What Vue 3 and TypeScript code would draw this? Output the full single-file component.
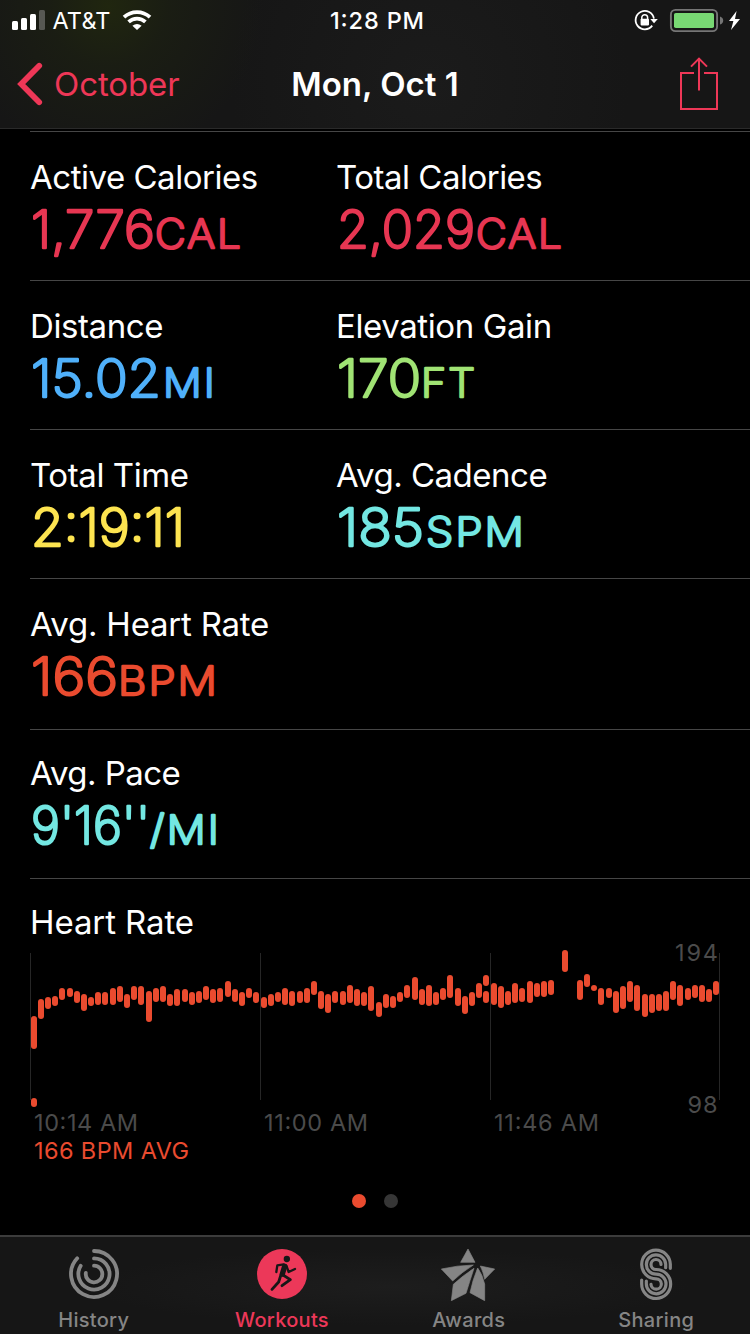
<script setup lang="ts">
interface Metric {
  label: string
  tracking?: number
  color: string
  value: string
  valueWidth: number
  unit?: string
  unitX?: number
  unitWidth?: number
}

const rows: Metric[][] = [
  [
    { label: 'Active Calories', tracking: -0.48, color: '#e73652', value: '1,776', valueWidth: 124, unit: 'CAL', unitX: 125, unitWidth: 88 },
    { label: 'Total Calories', tracking: -0.5, color: '#e73652', value: '2,029', valueWidth: 138, unit: 'CAL', unitX: 140, unitWidth: 88 },
  ],
  [
    { label: 'Distance', color: '#4fb0fa', value: '15.02', valueWidth: 130, unit: 'MI', unitX: 133, unitWidth: 54 },
    { label: 'Elevation Gain', color: '#a0e374', value: '170', valueWidth: 84, unit: 'FT', unitX: 85, unitWidth: 56 },
  ],
  [
    { label: 'Total Time', color: '#fde450', value: '2:19:11', valueWidth: 154 },
    { label: 'Avg. Cadence', tracking: -0.5, color: '#73e7e2', value: '185', valueWidth: 87, unit: 'SPM', unitX: 90, unitWidth: 100 },
  ],
  [{ label: 'Avg. Heart Rate', tracking: -0.22, color: '#ea4b2f', value: '166', valueWidth: 87, unit: 'BPM', unitX: 88, unitWidth: 101 }],
  [{ label: 'Avg. Pace', tracking: -0.55, color: '#73e7e2', value: "9'16''", valueWidth: 119, unit: '/MI', unitX: 120, unitWidth: 71 }],
]

// Each sample: centre x, top, bottom
const samples: number[][] = [
  [34, 76, 109], [34, 158, 167], [41, 59, 79], [48, 57, 69], [55, 56, 66], [62, 48, 60], [70, 48, 57],
  [77, 51, 63], [84, 54, 71], [91, 57, 66], [98, 52, 65], [105, 52, 65], [113, 48, 65], [120, 46, 62],
  [127, 54, 68], [134, 46, 60], [141, 46, 65], [149, 51, 82], [156, 48, 62], [163, 46, 62], [170, 54, 66],
  [177, 49, 66], [185, 49, 62], [192, 52, 65], [199, 51, 63], [206, 46, 60], [213, 49, 63], [220, 48, 62],
  [228, 41, 57], [235, 49, 62], [242, 52, 66], [249, 48, 58], [256, 52, 63], [264, 57, 68], [271, 54, 66],
  [278, 52, 62], [285, 48, 65], [292, 51, 66], [300, 51, 63], [307, 48, 63], [314, 41, 55], [321, 51, 69],
  [328, 54, 73], [335, 51, 63], [343, 51, 65], [350, 45, 63], [357, 49, 66], [364, 52, 66], [371, 46, 71],
  [379, 62, 77], [386, 54, 68], [393, 56, 68], [400, 52, 62], [407, 45, 58], [415, 37, 60], [422, 49, 65],
  [429, 45, 66], [436, 52, 65], [443, 48, 60], [450, 35, 58], [458, 48, 66], [465, 56, 74], [472, 52, 66],
  [479, 43, 58], [486, 35, 46], [486, 51, 63], [494, 43, 65], [501, 46, 68], [508, 51, 65], [515, 43, 63],
  [522, 48, 62], [530, 41, 63], [537, 43, 57], [544, 41, 57], [551, 40, 55], [565, 10, 32], [580, 40, 60],
  [587, 34, 47], [594, 45, 51], [601, 48, 65], [609, 48, 58], [616, 51, 73], [623, 46, 69], [630, 41, 62],
  [637, 45, 71], [645, 54, 77], [652, 54, 73], [659, 54, 71], [666, 51, 71], [673, 41, 60], [680, 45, 66],
  [688, 48, 60], [695, 45, 58], [702, 45, 62], [709, 49, 62], [716, 41, 55],
]

const gridLines = [30, 260, 490, 719]
</script>

<template>
  <div class="screen">
    <header class="top">
      <svg class="status" width="750" height="40" viewBox="0 0 750 40">
        <g fill="#fff">
          <rect x="12" y="21" width="6" height="9" rx="1.5" />
          <rect x="21" y="18" width="6" height="12" rx="1.5" />
          <rect x="30" y="14" width="6" height="16" rx="1.5" />
          <rect x="39" y="10" width="6" height="20" rx="1.5" fill="#575853" />
        </g>
        <text class="carrier" x="52.5" y="29" textLength="58">AT&amp;T</text>
        <g fill="none" stroke="#fff" stroke-width="3.7">
          <path d="M124 17.2 A19 19 0 0 1 150 17.2" />
          <path d="M128.6 21.9 A12.2 12.2 0 0 1 145.4 21.9" />
        </g>
        <path d="M137 30 L132.4 25.8 Q137 22 141.6 25.8 Z" fill="#fff" />
        <text class="clock" x="330" y="29" textLength="94">1:28 PM</text>
        <g fill="none" stroke="#fff">
          <path d="M652.2 25.6 A9.2 9.2 0 1 1 653.9 18.6" stroke-width="1.8" />
          <path d="M641.8 19.5 V17.6 A2.9 2.9 0 0 1 647.6 17.6 V19.5" stroke-width="1.5" />
        </g>
        <rect x="640.6" y="18.8" width="8.4" height="6.6" rx="0.8" fill="#fff" />
        <path d="M650.3 19 H657.8 L654 23.2 Z" fill="#fff" />
        <rect x="670.9" y="9.9" width="46.2" height="21.2" rx="4.6" fill="none" stroke="#757575" stroke-width="1.9" />
        <rect x="674" y="13" width="40" height="15" rx="1.8" fill="#78d873" />
        <path d="M720 16.4 Q723.2 17.4 723.2 20.5 Q723.2 23.6 720 24.6 Z" fill="#757575" />
        <path d="M736.6 11 L729 21 H733.4 L731 30 L740 19 H735 Z" fill="#fff" />
      </svg>
      <nav class="nav">
        <div class="back">
          <svg width="30" height="50" viewBox="0 0 30 50">
            <path d="M24.2 6.8 L6.2 25 L24.2 43.2" fill="none" stroke="#ee3757" stroke-width="5.8" stroke-linecap="round" stroke-linejoin="miter" />
          </svg>
          <span class="back-text">October</span>
        </div>
        <h1 class="title">Mon, Oct 1</h1>
        <svg class="share" width="40" height="54" viewBox="0 0 40 54">
          <path d="M15 16 H2 V52 H38 V16 H25 M20 33.5 V2 M12 9.6 L20 1.6 L28 9.6" fill="none" stroke="#ee3757" stroke-width="2" />
        </svg>
      </nav>
    </header>

    <main class="content">
      <section v-for="(row, i) in rows" :key="i" class="row">
        <div v-for="m in row" :key="m.label" class="metric">
          <div class="label" :style="{ letterSpacing: (m.tracking ?? -0.4) + 'px' }">{{ m.label }}</div>
          <svg class="value" width="260" height="60" viewBox="0 0 260 60" :fill="m.color" :stroke="m.color">
            <text class="number" x="1" y="48" :textLength="m.valueWidth" lengthAdjust="spacingAndGlyphs">{{ m.value }}</text>
            <text v-if="m.unit" class="unit" :x="m.unitX" y="48" :textLength="m.unitWidth" lengthAdjust="spacingAndGlyphs">{{ m.unit }}</text>
          </svg>
        </div>
      </section>

      <section class="row heart">
        <div class="label">Heart Rate</div>
        <svg class="chart" width="750" height="240" viewBox="0 -8 750 240">
          <rect v-for="x in gridLines" :key="x" :x="x" y="13" width="1" height="147" fill="#262626" />
          <rect
            v-for="([x, top, bottom], i) in samples"
            :key="i"
            :x="x - 3"
            :y="top"
            width="6"
            :height="bottom - top"
            rx="3"
            fill="#ea4b2f"
          />
          <g class="axis">
            <text x="675" y="21" textLength="43">194</text>
            <text x="687.5" y="173" textLength="30">98</text>
            <text x="34" y="191" textLength="104">10:14 AM</text>
            <text x="264" y="191" textLength="104">11:00 AM</text>
            <text x="494" y="191" textLength="105">11:46 AM</text>
            <text class="avg" x="34" y="219" textLength="155">166 BPM AVG</text>
          </g>
        </svg>
        <div class="dots"><i class="dot on"></i><i class="dot"></i></div>
      </section>
    </main>

    <footer class="tabs">
      <div class="tab history">
        <svg width="54" height="54" viewBox="-27 -27 54 54" fill="none" stroke="#858585" stroke-width="3.8" stroke-linecap="round">
          <path d="M0 -23 A23 23 0 1 1 -16.8 -15.7" />
          <path d="M0 -15.6 A15.6 15.6 0 1 1 -13.3 -8.2" />
          <path d="M0 -8.3 A8.3 8.3 0 1 1 -8.2 -1" />
        </svg>
        <span>History</span>
      </div>
      <div class="tab active">
        <svg width="54" height="54" viewBox="90 201 162 162">
          <circle cx="171" cy="282" r="75" fill="#ec3859" />
          <circle cx="185.5" cy="237" r="9.5" fill="#171717" />
          <g fill="none" stroke="#171717" stroke-linecap="round" stroke-linejoin="round">
            <path d="M154 276 L157 256 L176 253" stroke-width="7" />
            <path d="M184 257 L191 276 L210 267" stroke-width="7" />
            <path d="M179 259 L172 282" stroke-width="16" />
            <path d="M174 285 L196 299 L171 317" stroke-width="8.5" />
            <path d="M168 284 L161 306 L141 328" stroke-width="8.5" />
          </g>
        </svg>
        <span>Workouts</span>
      </div>
      <div class="tab awards">
        <svg width="54" height="54" viewBox="63 51 162 162" fill="#858585" stroke="#858585" stroke-width="2" stroke-linejoin="round">
          <path d="M144 57 L122 97 H165 Z" />
          <path d="M64 117 Q112 106 160 105 Q125 127 98 153 Z" />
          <path d="M181 108 L224 117 L194 148 Q190 126 181 108 Z" />
          <path d="M162 115 Q150 151 138 190 L94 212 L100 163 Q128 137 162 115 Z" />
          <path d="M173 114 Q187 132 194 162 V212 L150 188 Q158 149 173 114 Z" />
        </svg>
        <span>Awards</span>
      </div>
      <div class="tab sharing">
        <svg width="54" height="54" viewBox="72 51 162 162" fill="none" stroke="#858585" stroke-width="9.5" stroke-linecap="round">
          <path d="M196 115 V103 A43 43 0 1 0 153 146.5 A15.5 15.5 0 1 1 138 163" />
          <path d="M182 113 V103 A29 29 0 1 0 153 132.5 A29.5 29.5 0 1 1 124 162 V153" />
          <path d="M168 103 A15 15 0 1 0 153 118.5 A43.5 43.5 0 1 1 110 162 V150" />
        </svg>
        <span>Sharing</span>
      </div>
    </footer>
  </div>
</template>

<style>
body {
  background: #000;
}
</style>

<style scoped>
.screen {
  display: flex;
  flex-direction: column;
  width: 750px;
  height: 1334px;
  overflow: hidden;
  background: #000;
  color: #fff;
  font-family: Inter, "Liberation Sans", sans-serif;
}
.top {
  height: 129px;
  box-sizing: border-box;
  border-bottom: 1px solid #2a2a2a;
  background:
    radial-gradient(circle at 108px 6px, #20260f 0, rgba(28, 32, 18, 0.7) 60px, rgba(22, 22, 22, 0) 155px),
    radial-gradient(circle at 430px 80px, #1b1b1b 0, #161616 200px);
}
.status {
  display: block;
}
.carrier {
  font-size: 23.5px;
  fill: #fff;
}
.clock {
  font-size: 23.5px;
  font-weight: 500;
  fill: #fff;
}
.nav {
  display: grid;
  grid-template-columns: 240px 1fr 240px;
  align-items: center;
  height: 88px;
}
.back {
  display: flex;
  align-items: center;
  padding-left: 15px;
  color: #ee3757;
}
.back-text {
  margin-left: 9px;
  font-size: 33px;
  line-height: 40px;
  letter-spacing: -0.1px;
}
.title {
  margin: 0;
  font-size: 33px;
  line-height: 40px;
  font-weight: 600;
  text-align: center;
}
.share {
  justify-self: end;
  margin-right: 31px;
}
.content {
  flex: 1;
  padding-top: 2px;
}
.row {
  display: flex;
  height: 149px;
  margin-left: 30px;
  box-sizing: border-box;
  border-top: 1px solid #464646;
  padding-top: 24px;
}
.row:nth-child(4) {
  height: 151px;
}
.row:nth-child(5),
.row:nth-child(6) {
  padding-top: 22px;
}
.metric {
  width: 306px;
}
.label {
  height: 42px;
  line-height: 42px;
  font-size: 33px;
  letter-spacing: -0.1px;
  white-space: nowrap;
}
.value {
  display: block;
  margin-top: 2px;
  overflow: visible;
  stroke-width: 2.6px;
  stroke-linejoin: round;
}
.number {
  font-size: 52px;
  font-weight: 200;
}
.unit {
  font-size: 40px;
  font-weight: 200;
  letter-spacing: 2px;
}
.heart {
  flex-direction: column;
  height: auto;
}
.chart {
  display: block;
  margin: -11px 0 0 -30px;
}
.axis text {
  font-size: 23.5px;
  font-weight: 400;
  fill: #4b4b4b;
}
.axis .avg {
  fill: #ea4b2f;
}
.dots {
  display: flex;
  gap: 18px;
  margin: 22px 0 0 322px;
}
.dot {
  width: 14px;
  height: 14px;
  border-radius: 50%;
  background: #363636;
}
.dot.on {
  background: #ea4b2f;
}
.tabs {
  display: flex;
  height: 99px;
  box-sizing: border-box;
  border-top: 2px solid #3c3c3c;
  background: radial-gradient(ellipse at 390px 50px, #1d1d1d 0, #161616 300px);
}
.tab {
  display: flex;
  flex-direction: column;
  align-items: center;
  width: 187.5px;
  padding-top: 10px;
  font-size: 20px;
  line-height: 26px;
  font-weight: 500;
  letter-spacing: 0.3px;
  color: #858585;
}
.tab svg {
  display: block;
}
.tab span {
  margin-top: 6px;
}
.active {
  color: #ec3859;
}
.active svg,
.active span {
  margin-left: 1.5px;
}
.awards svg {
  margin-right: 1.5px;
}
</style>
